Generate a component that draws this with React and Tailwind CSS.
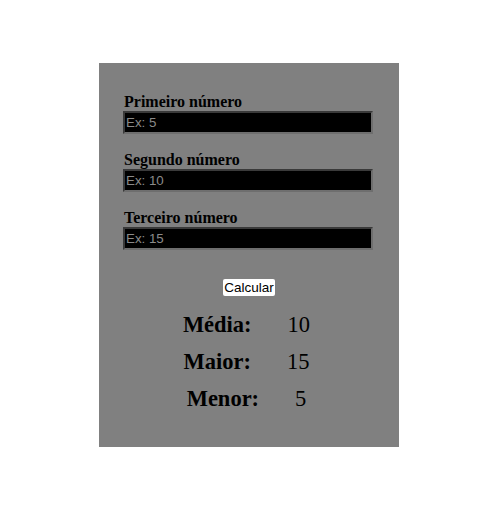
export default function App() {
  const fields = [
    { label: "Primeiro número", placeholder: "Ex: 5" },
    { label: "Segundo número", placeholder: "Ex: 10" },
    { label: "Terceiro número", placeholder: "Ex: 15" },
  ];
  const results = [
    { label: "Média:", value: "10" },
    { label: "Maior:", value: "15" },
    { label: "Menor:", value: "5" },
  ];

  return (
    <div className="min-h-screen bg-white flex justify-center pr-[5px] pt-[63px]">
      <div className="w-[300px] h-[384px] bg-[#808080] pt-[30px] px-[24px] flex flex-col">
        {fields.map((f) => (
          <div key={f.label} className="flex flex-col mb-[17px]">
            <label className="pl-[1px] font-['Liberation_Serif',serif] font-bold text-[16px] leading-[18px] text-black">
              {f.label}
            </label>
            <input
              type="text"
              placeholder={f.placeholder}
              className="w-[250px] h-[23px] bg-black border-2 border-t-[#3a3a3a] border-l-[#3a3a3a] border-b-[#6e6e6e] border-r-[#6e6e6e] px-[1px] text-[13.33px] font-['Liberation_Sans',sans-serif] text-white placeholder:text-[#8a8a8a] outline-none"
            />
          </div>
        ))}
        <div className="flex justify-center mt-[12px]">
          <button className="bg-white rounded-[2px] px-[1px] h-[17px] text-[13.5px] leading-[17px] font-['Liberation_Sans',sans-serif] text-black">
            Calcular
          </button>
        </div>
        <div className="flex flex-col mt-[16px] gap-[11px]">
          {results.map((r) => (
            <div
              key={r.label}
              className="flex justify-center gap-9 pr-[5px] font-['Liberation_Serif',serif] text-[22.5px] leading-[26px] text-black"
            >
              <span className="font-bold">{r.label}</span>
              <span>{r.value}</span>
            </div>
          ))}
        </div>
      </div>
    </div>
  );
}
